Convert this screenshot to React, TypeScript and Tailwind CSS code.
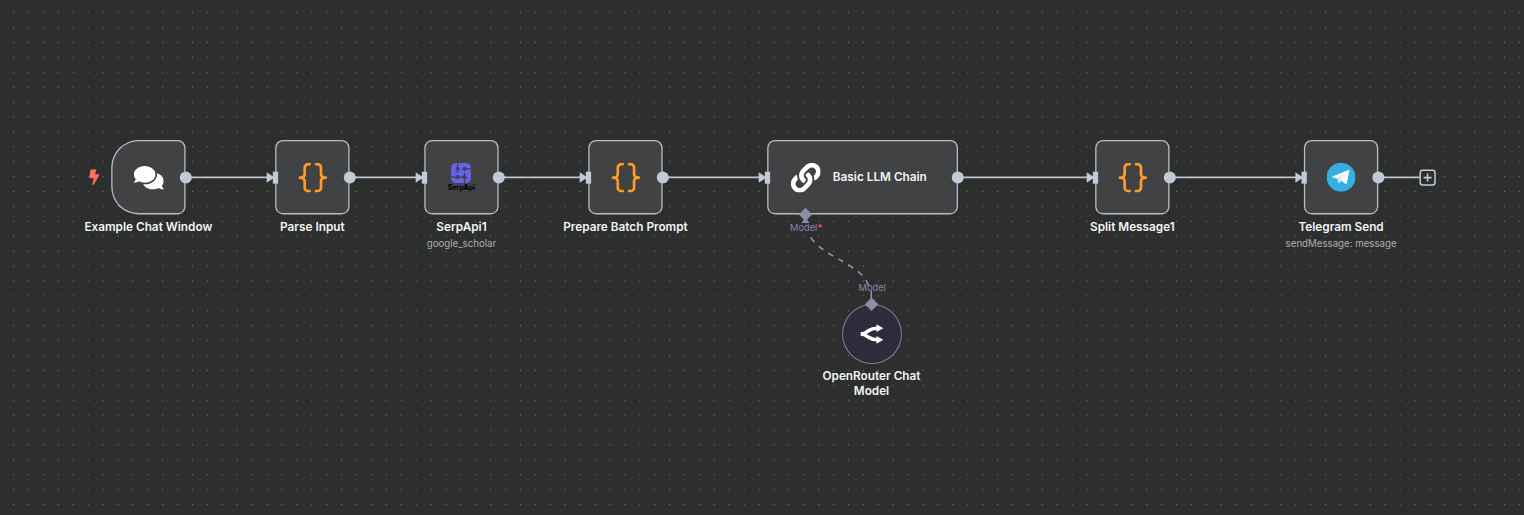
import React from "react";
import { FaBolt, FaComments, FaLink } from "react-icons/fa";

function BracesIcon() {
  return (
    <svg viewBox="0 0 30 30" className="h-[32px] w-[32px]" fill="none" stroke="#ff9b26" strokeWidth="2.7">
      <path d="M11.800 1.400H10.400a3.600 3.600 0 0 0-3.600 3.600v6.200q0 3.800-4.800 3.800q4.800 0 4.800 3.800v6.200a3.600 3.600 0 0 0 3.600 3.600h1.400" strokeLinecap="round" strokeLinejoin="round" />
      <path d="M18.200 1.400h1.400a3.600 3.600 0 0 1 3.600 3.600v6.200q0 3.800 4.800 3.800q-4.800 0-4.800 3.800v6.200a3.600 3.600 0 0 1-3.600 3.600h-1.400" strokeLinecap="round" strokeLinejoin="round" />
    </svg>
  );
}

function SerpApiIcon() {
  return (
    <div className="flex flex-col items-center">
      <svg viewBox="0 0 22 22" className="h-[22px] w-[22px]">
        <rect x="0.300" y="0.300" width="21.400" height="21.400" rx="5" fill="#6562ee" />
        <g stroke="#414244" strokeWidth="1.200" fill="none">
          <path d="M7.400 6.500V0M7.400 6.500V11M0 15.400H7.400M14.800 6.500H22M14.800 11V15.500M14.800 15.500V22M7.400 15.400H14.800" />
        </g>
        <g fill="#414244">
          <circle cx="7.400" cy="6.500" r="2.300" />
          <circle cx="14.800" cy="6.500" r="2.300" />
          <circle cx="7.400" cy="15.400" r="2.300" />
          <circle cx="14.800" cy="15.400" r="2.300" />
        </g>
      </svg>
      <span className="text-[7.500px] font-bold leading-[9px] text-black">SerpApi</span>
    </div>
  );
}

function TelegramIcon() {
  return (
    <svg viewBox="0 0 30 30" className="h-[31px] w-[31px]">
      <circle cx="15" cy="15" r="15" fill="#37aee2" />
      <path d="M12.300 16.600L19.400 21.700c.8.400 1.400.2 1.600-.8l2.500-12c.2-1-.4-1.600-1.300-1.200L6.600 13.900c-1 .4-1 1 0 1.300z" fill="#fff" />
      <path d="M10.700 16.300l1.500 5c.5.100.700-.1 1-.4l1.900-2-2.500-2 6.500-6.200z" fill="#c8daea" />
      <path d="M12.500 21.200l.5-4.200 7-6.700-5.200 7.300z" fill="#e3eef6" />
    </svg>
  );
}

function RouterIcon() {
  return (
    <svg viewBox="0 0 24 20" className="h-[20px] w-[24px]" fill="none" stroke="#fff" strokeWidth="3.600">
      <path d="M0.800 10C4.500 10 6 8.500 8.500 6.700S13 4.200 17 4.200" />
      <path d="M0.800 10C4.500 10 6 11.500 8.500 13.300S13 15.800 17 15.800" />
      <path d="M16.500 0.300L23.300 4.200L16.500 8.100zM16.500 11.900L23.300 15.800L16.500 19.700z" fill="#fff" stroke="none" />
    </svg>
  );
}

type NodeProps = {
  place: string;
  shape?: string;
  label?: string;
  note?: string;
  children: React.ReactNode;
};

function FlowNode({ place, shape = "w-[77px] rounded-[7px]", label, note, children }: NodeProps) {
  return (
    <div className={`absolute top-[0px] flex flex-col items-center ${place}`}>
      <div className={`flex h-[77px] items-center justify-center bg-[#414244] shadow-[0_0_0_1.4px_#b9bbc8] ${shape}`}>
        {children}
      </div>
      {label && (
        <div className="mt-[5.700px] whitespace-nowrap text-[12.650px] font-semibold leading-[18px] text-[#f4f4f6]">{label}</div>
      )}
      {note && <div className="whitespace-nowrap text-[10.400px] leading-[18px] text-[#adaeb2]">{note}</div>}
    </div>
  );
}

const edges = [
  [186, 275.5],
  [350, 424.5],
  [499, 588.5],
  [663, 767.5],
  [958, 1095.5],
  [1170, 1304.2],
];

function Background() {
  return (
    <svg className="absolute inset-0 h-full w-full">
      <pattern id="dots" x="6.150" y="5.150" width="14.909" height="14.909" patternUnits="userSpaceOnUse">
        <circle cx="7.455" cy="7.455" r="0.620" fill="#828486" />
      </pattern>
      <rect width="100%" height="100%" fill="url(#dots)" />
    </svg>
  );
}

function Edges() {
  return (
    <svg className="absolute inset-0 h-full w-full">
      {edges.map(([from, to]) => (
        <g key={from}>
          <path d={`M${from} 177.400H${to - 5}`} stroke="#bfc4d0" strokeWidth="1.600" />
          <path d={`M${to - 8.800} 172.300L${to - 1} 177.500L${to - 8.800} 182.700z`} fill="#c3c9d5" />
        </g>
      ))}
      <path d="M1378 177.400H1420" stroke="#bfc4d0" strokeWidth="1.600" />
      <path d="M810.600 237.500C819 249 832 255 841 260.500S865 273 869 287" fill="none" stroke="#8d8da6" strokeWidth="1.700" strokeDasharray="6 5.700" />
      <path d="M871.300 291V302M805.500 216V222" stroke="#9292aa" strokeWidth="1.500" />
    </svg>
  );
}

function Handles() {
  return (
    <svg className="absolute inset-0 h-full w-full">
      {edges.map(([from, to]) => (
        <g key={from} fill="#c3c9d5">
          <circle cx={from - 0.200} cy="177.500" r="6" />
          <rect x={to - 2.700} y="171.700" width="5.300" height="12" />
        </g>
      ))}
      <circle cx="1378.400" cy="177.500" r="6" fill="#c3c9d5" />
      <rect x="1420.200" y="170.200" width="14.800" height="14.800" rx="2.500" fill="#2d2e2e" stroke="#c3c9d5" strokeWidth="1.500" />
      <path d="M1427.600 173.600v8M1423.600 177.600h8" stroke="#c3c9d5" strokeWidth="1.600" />
      <path d="M805.500 207.800l6.700 6.700-6.700 6.700-6.700-6.700z" fill="#8d8da6" />
      <path d="M805.500 217l4 6h-8z" fill="#8d8da6" />
      <path d="M871.600 297.500l6.700 6.700-6.700 6.700-6.700-6.700z" fill="#8d8da6" />
    </svg>
  );
}

export default function App() {
  return (
    <main className="relative h-[515px] w-full overflow-hidden bg-[#2d2e2e] font-[Inter,sans-serif]">
      <Background />
      <Edges />

      <div className="absolute left-[112px] top-[141px] origin-top-left translate-x-[0.5px] translate-y-[0.35px] scale-[0.9318]">
        <FaBolt className="absolute left-[-28px] top-[30px] h-[17px] w-[17px] text-[#ff6f5c]" />
        <FlowNode place="left-[-40px] w-[157px]" shape="w-[77px] rounded-l-[28px] rounded-r-[7px]" label="Example Chat Window">
          <FaComments className="h-[32px] w-[32px] text-white" />
        </FlowNode>
        <FlowNode place="left-[136px] w-[157px]" label="Parse Input">
          <BracesIcon />
        </FlowNode>
        <FlowNode place="left-[296px] w-[157px]" label="SerpApi1" note="google_scholar">
          <SerpApiIcon />
        </FlowNode>
        <FlowNode place="left-[472px] w-[157px]" label="Prepare Batch Prompt">
          <BracesIcon />
        </FlowNode>
        <FlowNode place="left-[704px] w-[202px]" shape="w-full gap-[13px] rounded-[7px] pr-[8px]">
          <FaLink className="h-[32px] w-[32px] text-white" />
          <span className="whitespace-nowrap pt-[2px] text-[12.650px] font-semibold text-[#f4f4f6]">Basic LLM Chain</span>
        </FlowNode>
        <FlowNode place="left-[1016px] w-[157px]" label="Split Message1">
          <BracesIcon />
        </FlowNode>
        <FlowNode place="left-[1240px] w-[157px]" label="Telegram Send" note="sendMessage: message">
          <TelegramIcon />
        </FlowNode>
      </div>

      <section className="absolute left-[811.500px] top-[304.600px] flex w-[120px] flex-col items-center">
        <div className="flex h-[58px] w-[58px] items-center justify-center rounded-full bg-[#2c2c3a] shadow-[0_0_0_1px_#838389]">
          <RouterIcon />
        </div>
        <div className="mt-[6px] w-[110px] text-center text-[11.790px] font-semibold leading-[15px] text-[#f4f4f6]">
          OpenRouter Chat Model
        </div>
      </section>

      <Handles />
      <div className="absolute left-[790px] top-[221px] text-[9.300px] leading-[14px] text-[#8d85b4]">
        Model<span className="font-bold text-[#f04a50]">*</span>
      </div>
      <div className="absolute left-[858.500px] top-[281px] text-[9.300px] leading-[14px] text-[#8d85b4]">Model</div>
    </main>
  );
}
